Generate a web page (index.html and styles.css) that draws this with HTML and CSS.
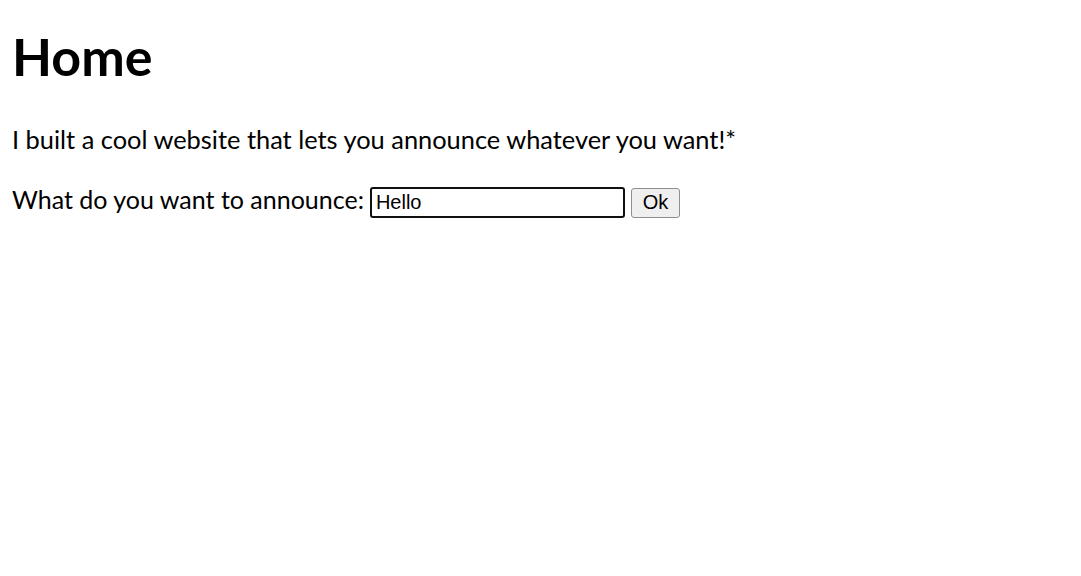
FILE: index.html
```html
<!DOCTYPE html>
<html lang="en">
<head>
<meta charset="utf-8">
<title>Home</title>
<link rel="stylesheet" href="styles.css">
</head>
<body>
<main class="page">
  <h1 class="title">Home</h1>
  <p class="intro">I built a cool website that lets you announce whatever you want!*</p>
  <form class="announce" onsubmit="return false">
    <label class="announce-label" for="msg">What do you want to announce:</label>
    <input class="announce-input" id="msg" type="text" value="Hello">
    <button class="announce-btn" type="submit">Ok</button>
  </form>
</main>
</body>
</html>
```
FILE: styles.css
```css
html, body {
  margin: 0;
  padding: 0;
  background: #ffffff;
}
.page {
  padding: 0 12px;
  font-family: Lato, "Open Sans", sans-serif;
  color: #000;
}
.title {
  font-size: 52px;
  font-weight: 700;
  line-height: 60px;
  margin: 26px 0 0 0;
}
.intro {
  font-size: 25.4px;
  line-height: 30px;
  margin: 38px 0 0 0;
}
.announce {
  display: flex;
  align-items: center;
  margin-top: 30px;
}
.announce-label {
  font-size: 25px;
  line-height: 30px;
  margin: 0 6px 7px 0;
}
.announce-input {
  box-sizing: border-box;
  width: 255px;
  height: 31px;
  border: 2px solid #101010;
  border-radius: 3px;
  padding: 0 4px;
  font-family: "Liberation Sans", Arial, sans-serif;
  font-size: 20px;
  color: #000;
  outline: none;
  margin: 0;
}
.announce-btn {
  box-sizing: border-box;
  width: 49px;
  height: 30px;
  margin-left: 6px;
  border: 1px solid #8f8f8f;
  border-radius: 3px;
  background: #efefef;
  font-family: "Liberation Sans", Arial, sans-serif;
  font-size: 20px;
  color: #000;
  padding: 0;
}
```
